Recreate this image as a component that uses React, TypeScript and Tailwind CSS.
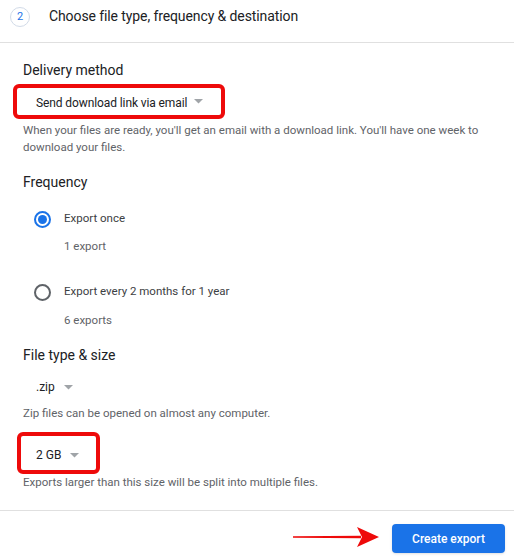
export default function App() {
  return (
    <div className="w-[514px] h-[559px] overflow-hidden bg-white font-['Roboto',sans-serif] text-[#202124]">
      {/* step header */}
      <div className="h-[43px] flex items-start pt-[7px] pl-[10px] border-b border-[#e0e0e0]">
        <div className="w-5 h-5 rounded-full border border-[#d2dbe8] flex items-center justify-center text-[11px] text-[#1a73e8]">
          2
        </div>
        <div className="ml-[19px] text-[14px] leading-5 -mt-[1px] tracking-[-0.1px]">Choose file type, frequency &amp; destination</div>
      </div>

      <div className="px-[23px]">
        {/* delivery */}
        <div className="mt-[17px] text-[14px] leading-5">Delivery method</div>
        <div className="mt-1 -ml-[10px] w-[212px] h-[35px] border-4 border-[#ee0a0a] rounded-[6px] flex items-center pl-[19px]">
          <span className="text-[12px] leading-4 pt-[2px] tracking-[-0.1px]">Send download link via email</span>
          <Caret className="ml-[7px]" />
        </div>
        <p className="mt-[3px] w-[480px] text-[11.5px] leading-[17px] text-[#5f6368]">
          When your files are ready, you'll get an email with a download link. You'll have one week to download your files.
        </p>

        {/* frequency */}
        <div className="mt-4 text-[14px] leading-5">Frequency</div>
        <Radio checked label="Export once" sub="1 export" className="mt-[17px]" />
        <Radio label="Export every 2 months for 1 year" sub="6 exports" className="mt-7" />

        {/* file type */}
        <div className="mt-[17px] text-[14px] leading-5">File type &amp; size</div>
        <div className="mt-[14px] ml-[13px] flex items-center h-4">
          <span className="text-[12px] leading-4">.zip</span>
          <Caret className="ml-[9px]" />
        </div>
        <p className="mt-[10px] text-[11.5px] leading-[17px] text-[#5f6368]">Zip files can be opened on almost any computer.</p>
        <div className="mt-[10px] -ml-[6px] w-[83px] h-[42px] border-4 border-[#ee0a0a] rounded-[6px] flex items-center pl-[15px]">
          <span className="text-[12px] leading-4 pt-[4px]">2 GB</span>
          <Caret className="ml-[9px] mt-[4px]" />
        </div>
        <p className="text-[11.5px] leading-[17px] text-[#5f6368]">Exports larger than this size will be split into multiple files.</p>
      </div>

      {/* footer */}
      <div className="mt-[19px] border-t border-[#e0e0e0] pt-[13px] pr-[9px] flex items-center justify-end">
        <svg width="88" height="22" viewBox="0 0 88 22" className="mr-[11px] -mt-[4px]">
          <path d="M0 10.2 L68 9.8 L68 12.2 L0 11.8 Z" fill="#ee0a0a" />
          <path d="M64 1 L86 11 L64 21 L69 11 Z" fill="#ee0a0a" />
        </svg>
        <button className="w-[113px] h-[29px] rounded-[4px] bg-[#1a73e8] text-white text-[12px] font-medium shadow-sm">
          Create export
        </button>
      </div>
    </div>
  );
}

function Caret({ className = "" }: { className?: string }) {
  return (
    <svg width="9" height="5" viewBox="0 0 9 5" className={className}>
      <path d="M0 0 L9 0 L4.5 4.5 Z" fill="#a0a4a8" />
    </svg>
  );
}

function Radio({ checked, label, sub, className = "" }: { checked?: boolean; label: string; sub: string; className?: string }) {
  return (
    <div className={className}>
      <div className="flex items-center h-5 ml-[11px]">
        <div
          className={`w-[17px] h-[17px] rounded-full border-2 flex items-center justify-center ${
            checked ? "border-[#1a73e8]" : "border-[#5f6368]"
          }`}
        >
          {checked && <div className="w-[9px] h-[9px] rounded-full bg-[#1a73e8]" />}
        </div>
        <span className="ml-[13px] text-[11.5px] text-[#3c4043]">{label}</span>
      </div>
      <div className={`${checked ? "mt-[9px]" : "mt-[10px]"} ml-[41px] text-[11.5px] leading-4 text-[#5f6368]`}>{sub}</div>
    </div>
  );
}
